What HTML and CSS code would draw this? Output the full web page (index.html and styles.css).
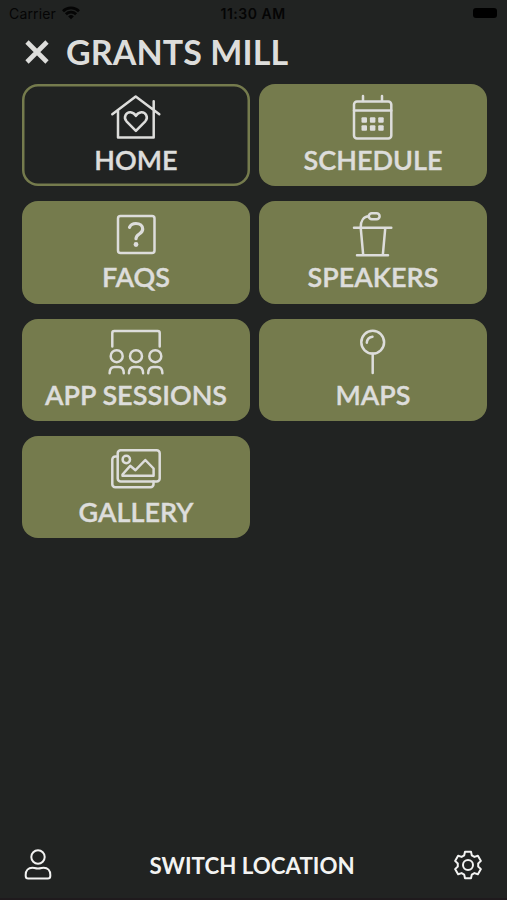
FILE: index.html
```html
<!DOCTYPE html>
<html lang="en">
<head>
  <meta charset="UTF-8">
  <title>Grants Mill</title>
  <link rel="stylesheet" href="styles.css">
</head>
<body>

  <div class="status-bar">
    <div class="carrier">
      <span>Carrier</span>
      <svg class="wifi" viewBox="0 0 18 14">
        <path d="M1 5.2a11.5 11.5 0 0 1 16 0M3.9 8.2a7.4 7.4 0 0 1 10.2 0"/>
        <path class="solid" d="M9 13.2L6.2 10.4a4 4 0 0 1 5.6 0z"/>
      </svg>
    </div>
    <span class="time">11:30 AM</span>
    <div class="battery-wrap"><span class="battery"></span></div>
  </div>

  <header class="header">
    <button class="close-btn">
      <svg viewBox="0 0 26 26"><path d="M3 3l20 20M23 3L3 23"/></svg>
    </button>
    <h1>GRANTS MILL</h1>
  </header>

  <nav class="menu">
    <a class="tile active">
      <svg class="icon" viewBox="0 0 60 50">
        <path d="M6.3 22.3L29.7 4.6l23.6 17.7M12 19v26.5h35.7V9.3"/>
        <path d="M29.9 38.8L20.5 29.3c-3.6-4.2-.2-9.4 4-9.1 3 .2 4.4 1.9 5.4 3.8 1-1.9 2.4-3.6 5.4-3.8 4.2-.3 7.6 4.9 4 9.1z"/>
      </svg>
      <span>HOME</span>
    </a>
    <a class="tile">
      <svg class="icon" viewBox="0 0 60 50">
        <rect x="11" y="9.5" width="37.3" height="37" rx="3"/>
        <path d="M11 18.6h37.3M20 4v5M39 4v5"/>
        <g class="solid">
          <rect x="18.5" y="25.2" width="5.5" height="5.5" rx="1"/>
          <rect x="26.9" y="25.2" width="5.5" height="5.5" rx="1"/>
          <rect x="35.2" y="25.2" width="5.5" height="5.5" rx="1"/>
          <rect x="18.5" y="33.3" width="5.5" height="5.5" rx="1"/>
          <rect x="26.9" y="33.3" width="5.5" height="5.5" rx="1"/>
          <rect x="35.2" y="33.3" width="5.5" height="5.5" rx="1"/>
        </g>
      </svg>
      <span>SCHEDULE</span>
    </a>
    <a class="tile">
      <svg class="icon" viewBox="0 0 60 50">
        <rect x="12" y="7" width="36.5" height="37" rx="2.5"/>
        <path class="thick" d="M23.5 18.3c1-2.4 3.3-3.8 6.4-3.8 4 0 6.8 2.3 6.8 5.5 0 5.4-6.7 4.6-6.7 9.7"/>
        <circle class="solid" cx="30" cy="35.5" r="2.4"/>
      </svg>
      <span>FAQS</span>
    </a>
    <a class="tile">
      <svg class="icon" viewBox="0 0 60 50">
        <rect x="25.8" y="4.3" width="10.8" height="6" rx="3"/>
        <path d="M25.8 7.3c-5 .2-8.2 4.2-8.1 11.4l2.5 27.5M11 18.7h37.3M42.3 18.7l-2.5 27.5M14 46.3h31"/>
      </svg>
      <span>SPEAKERS</span>
    </a>
    <a class="tile">
      <svg class="icon" viewBox="0 0 60 50">
        <path d="M6.3 19.5V6a2 2 0 0 1 2-2h43.4a2 2 0 0 1 2 2v13.5"/>
        <circle cx="10.7" cy="29.2" r="6"/>
        <circle cx="30" cy="29.2" r="6"/>
        <circle cx="49.3" cy="29.2" r="6"/>
        <path d="M3.6 46.3c0-4 2-6.4 5-6.4h4.2c3 0 5 2.4 5 6.4M22.9 46.3c0-4 2-6.4 5-6.4h4.2c3 0 5 2.4 5 6.4M42.2 46.3c0-4 2-6.4 5-6.4h4.2c3 0 5 2.4 5 6.4"/>
      </svg>
      <span>APP SESSIONS</span>
    </a>
    <a class="tile">
      <svg class="icon" viewBox="0 0 60 50">
        <circle cx="29.7" cy="15.2" r="11.4"/>
        <path d="M29.7 26.7v19.4M23.8 15.7c.2-3.3 2.2-5.5 5.7-6"/>
      </svg>
      <span>MAPS</span>
    </a>
    <a class="tile">
      <svg class="icon" viewBox="0 0 60 50">
        <rect x="11.7" y="6.3" width="42" height="31.3" rx="3"/>
        <path d="M11.7 12.5H9.3a3 3 0 0 0-3 3v24.7a3 3 0 0 0 3 3h35.2a3 3 0 0 0 3-3v-2.6"/>
        <circle cx="20.3" cy="15.5" r="3.7"/>
        <path d="M16.5 31.8v-1.3l7.7-8.7 5.3 4.4 9.8-10.2 8.3 8.5v7.3z"/>
      </svg>
      <span>GALLERY</span>
    </a>
  </nav>

  <footer class="footer">
    <button class="footer-btn">
      <svg viewBox="0 0 30 32">
        <circle cx="15" cy="8" r="6.7"/>
        <path d="M9.3 18.7c1.8 0 2.8.9 5.7.9s3.9-.9 5.7-.9c4 0 6.6 2.9 6.6 7v1.4c0 1.6-.9 2.5-2.5 2.5H5.2c-1.6 0-2.5-.9-2.5-2.5v-1.4c0-4.1 2.6-7 6.6-7z"/>
      </svg>
    </button>
    <span class="switch">SWITCH LOCATION</span>
    <button class="footer-btn">
      <svg viewBox="-15 -16 30 32">
        <circle r="5"/>
        <path d="M-3.8-9.6L-3-13.3H3L3.8-9.6 6.4-8.1 9.9-9.3 12.9-4.1 10.2-1.5V1.5L12.9 4.1 9.9 9.3 6.4 8.1 3.8 9.6 3 13.3H-3L-3.8 9.6-6.4 8.1-9.9 9.3-12.9 4.1-10.2 1.5V-1.5L-12.9-4.1-9.9-9.3-6.4-8.1z"/>
      </svg>
    </button>
  </footer>

</body>
</html>
```

FILE: styles.css
```css
* {
  margin: 0;
  padding: 0;
  box-sizing: border-box;
}

body {
  height: 100vh;
  overflow: hidden;
  display: flex;
  flex-direction: column;
  font-family: Lato, sans-serif;
  background-color: #212322;
  color: #dddddb;
}

button {
  background: none;
  border: none;
  color: inherit;
  cursor: pointer;
}

svg {
  display: block;
  fill: none;
  stroke: currentColor;
  stroke-width: 2.5;
  stroke-linecap: round;
  stroke-linejoin: round;
}

.solid {
  fill: currentColor;
  stroke: none;
}

.thick {
  stroke-width: 3.2;
}

.status-bar {
  height: 26px;
  padding: 0 10px 0 9px;
  display: flex;
  align-items: center;
  font-family: Inter, sans-serif;
  font-size: 14px;
  color: #050505;
}

.carrier,
.battery-wrap {
  flex: 1;
  display: flex;
  align-items: center;
  gap: 6px;
}

.carrier {
  letter-spacing: 0.15px;
}

.wifi {
  width: 18px;
  height: 14px;
  stroke-width: 2.8;
  stroke-linecap: butt;
}

.time {
  font-weight: 600;
  letter-spacing: 0.5px;
}

.battery-wrap {
  justify-content: flex-end;
}

.battery {
  width: 24px;
  height: 10px;
  border-radius: 3px;
  background-color: #000;
}

.header {
  height: 58px;
  padding: 2px 24px 9px;
  display: flex;
  align-items: center;
  gap: 16px;
}

.close-btn svg {
  width: 26px;
  height: 26px;
  stroke-width: 4.6;
  stroke-linecap: butt;
}

h1 {
  font-size: 34px;
  font-weight: 700;
  line-height: 40px;
  letter-spacing: 0.1px;
}

.menu {
  padding: 0 20px 0 22px;
  display: grid;
  grid-template-columns: 1fr 1fr;
  grid-auto-rows: 102.3px;
  gap: 15px 9px;
}

.tile {
  display: flex;
  flex-direction: column;
  align-items: center;
  padding-top: 8px;
  border-radius: 16px;
  background-color: #757b4d;
  font-size: 27px;
  font-weight: 600;
  line-height: 36px;
  -webkit-text-stroke: 0.4px currentColor;
}

.tile.active {
  background: none;
  box-shadow: inset 0 0 0 2.5px #757b4d;
}

.icon {
  width: 60px;
  height: 50px;
}

.footer {
  margin-top: auto;
  height: 68px;
  padding: 0 24px 0 23px;
  display: flex;
  justify-content: space-between;
  align-items: center;
  color: #f3f3f2;
  border-bottom: 2px solid #1f1a1d;
}

.footer-btn svg {
  width: 30px;
  height: 32px;
  stroke-width: 2;
}

.switch {
  padding-right: 2px;
  font-size: 22.3px;
  font-weight: 700;
}
```
